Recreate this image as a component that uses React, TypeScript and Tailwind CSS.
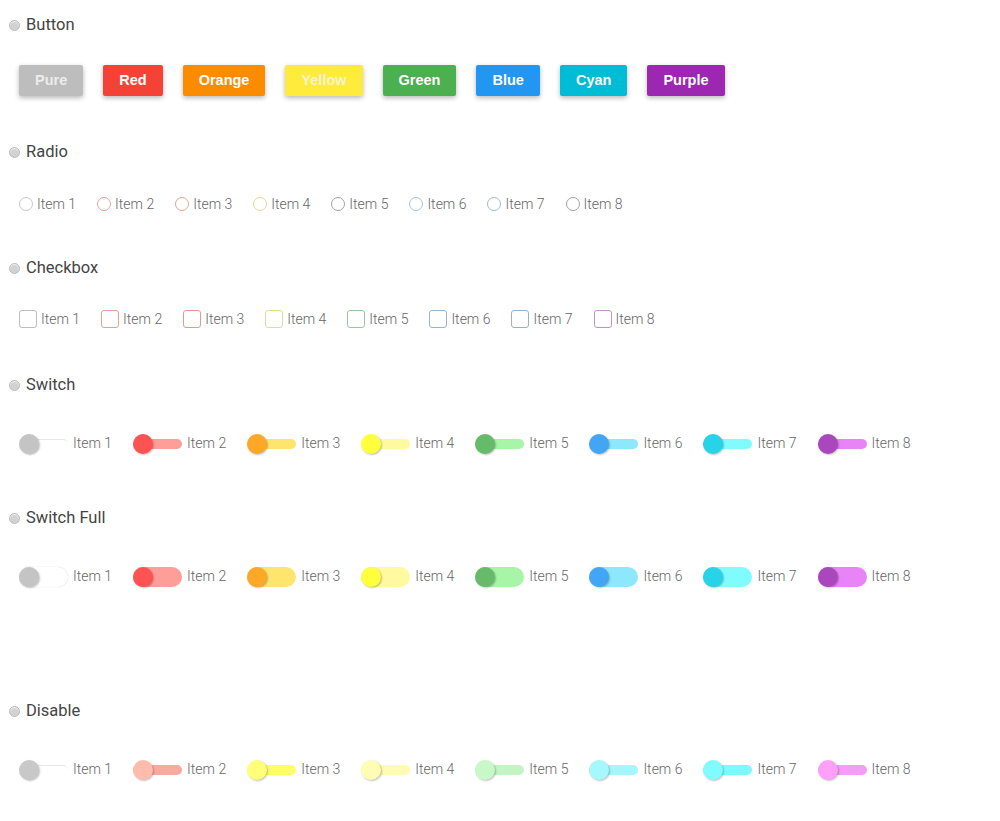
import React from "react";

const buttons = [
  { label: "Pure", cls: "bg-[#bdbdbd] text-[#ececec]" },
  { label: "Red", cls: "bg-[#f44336] text-white" },
  { label: "Orange", cls: "bg-[#fb8c00] text-white" },
  { label: "Yellow", cls: "bg-[#ffeb3b] text-[#f3f3d0]" },
  { label: "Green", cls: "bg-[#4caf50] text-white" },
  { label: "Blue", cls: "bg-[#2196f3] text-white" },
  { label: "Cyan", cls: "bg-[#00bcd4] text-white" },
  { label: "Purple", cls: "bg-[#9c27b0] text-white" },
];

const radioBorders = [
  "border-[#c8c8c8]",
  "border-[#e2a596]",
  "border-[#e8a48e]",
  "border-[#e3d59a]",
  "border-[#a0a0a0]",
  "border-[#a6c4de]",
  "border-[#9cbcd0]",
  "border-[#a0a0a0]",
];

const checkBorders = [
  "border-[#bdbdbd]",
  "border-[#e0a292]",
  "border-[#e09c8a]",
  "border-[#e6d896]",
  "border-[#98c898]",
  "border-[#94b4d8]",
  "border-[#94b2d0]",
  "border-[#bc94c8]",
];

// knob + track colours for each switch row
const switchColors = [
  { knob: "bg-[#c4c4c4]", track: "bg-white border-t border-[#e6e6e6]" },
  { knob: "bg-[#ff5252]", track: "bg-[#ff9e98]" },
  { knob: "bg-[#ffa726]", track: "bg-[#ffe56e]" },
  { knob: "bg-[#ffff3b]", track: "bg-[#fff9a0]" },
  { knob: "bg-[#66bb6a]", track: "bg-[#a8f5a8]" },
  { knob: "bg-[#42a5f5]", track: "bg-[#8ee8fd]" },
  { knob: "bg-[#26d3e8]", track: "bg-[#80fcff]" },
  { knob: "bg-[#ab47bc]", track: "bg-[#e884f8]" },
];

const disabledColors = [
  { knob: "bg-[#c8c8c8]", track: "bg-white border-t border-[#e6e6e6]" },
  { knob: "bg-[#ffbcac]", track: "bg-[#f9aa9e]" },
  { knob: "bg-[#ffff78]", track: "bg-[#ffff6a]" },
  { knob: "bg-[#fffcb4]", track: "bg-[#fffbb0]" },
  { knob: "bg-[#c8f8c8]", track: "bg-[#c4f4c4]" },
  { knob: "bg-[#a4f8ff]", track: "bg-[#a4f6ff]" },
  { knob: "bg-[#80fcff]", track: "bg-[#7cfaff]" },
  { knob: "bg-[#ffa0f8]", track: "bg-[#f49cf6]" },
];

const items = [1, 2, 3, 4, 5, 6, 7, 8];

function Header({ title, className }: { title: string; className: string }) {
  return (
    <div className={`flex items-center gap-[6px] h-5 ${className}`}>
      <span className="w-[11px] h-[11px] rounded-full bg-[#d2d2d2] border border-[#bcbcbc] shadow-[inset_0_1px_1px_rgba(255,255,255,0.8)]" />
      <span className="text-[16.5px] text-[#444] font-['Roboto',sans-serif]">{title}</span>
    </div>
  );
}

function Label({ n }: { n: number }) {
  return (
    <span className="text-[14px] font-light text-[#666] font-['Roboto',sans-serif]">Item {n}</span>
  );
}

function Switch({ knob, track, full }: { knob: string; track: string; full?: boolean }) {
  return (
    <span className="relative inline-block w-[49px] h-5">
      <span
        className={`absolute left-0 right-0 rounded-full ${track} ${
          full ? "top-0 h-5" : "top-[5px] h-[10px]"
        }`}
      />
      <span
        className={`absolute left-0 top-0 w-5 h-5 rounded-full ${knob} shadow-[1px_1px_2px_rgba(0,0,0,0.25)]`}
      />
    </span>
  );
}

export default function App() {
  return (
    <div className="min-h-screen bg-white pl-[9px] pt-[15px] font-['Roboto',sans-serif]">
      <Header title="Button" className="" />
      <div className="flex gap-5 mt-[30px] pl-[10px]">
        {buttons.map((b) => (
          <button
            key={b.label}
            className={`h-[31px] px-4 rounded-[2px] text-[14.5px] font-bold font-['Liberation_Sans',Arial,sans-serif] shadow-[0_2px_5px_rgba(0,0,0,0.28)] ${b.cls}`}
          >
            {b.label}
          </button>
        ))}
      </div>

      <Header title="Radio" className="mt-[46px]" />
      <div className="flex gap-[21px] mt-[32px] h-5 pl-[10px] items-center">
        {items.map((n, i) => (
          <label key={n} className="flex items-center gap-1">
            <span className={`w-[14px] h-[14px] rounded-full border ${radioBorders[i]}`} />
            <Label n={n} />
          </label>
        ))}
      </div>

      <Header title="Checkbox" className="mt-[44px]" />
      <div className="flex gap-[21px] mt-[32px] h-[18px] pl-[10px] items-center">
        {items.map((n, i) => (
          <label key={n} className="flex items-center gap-1">
            <span className={`w-[18px] h-[18px] rounded-[3px] border-[1.5px] ${checkBorders[i]}`} />
            <Label n={n} />
          </label>
        ))}
      </div>

      <Header title="Switch" className="mt-[47px]" />
      <div className="flex gap-[21px] mt-[38px] pl-[10px] items-center">
        {items.map((n, i) => (
          <label key={n} className="flex items-center gap-[5px]">
            <Switch knob={switchColors[i].knob} track={switchColors[i].track} />
            <Label n={n} />
          </label>
        ))}
      </div>

      <Header title="Switch Full" className="mt-[54px]" />
      <div className="flex gap-[21px] mt-[38px] pl-[10px] items-center">
        {items.map((n, i) => (
          <label key={n} className="flex items-center gap-[5px]">
            <Switch
              knob={switchColors[i].knob}
              track={i === 0 ? "bg-white shadow-[0_0_1px_rgba(0,0,0,0.25)]" : switchColors[i].track}
              full
            />
            <Label n={n} />
          </label>
        ))}
      </div>

      <Header title="Disable" className="mt-[114px]" />
      <div className="flex gap-[21px] mt-[38px] pl-[10px] items-center">
        {items.map((n, i) => (
          <label key={n} className="flex items-center gap-[5px]">
            <Switch knob={disabledColors[i].knob} track={disabledColors[i].track} />
            <Label n={n} />
          </label>
        ))}
      </div>
    </div>
  );
}
